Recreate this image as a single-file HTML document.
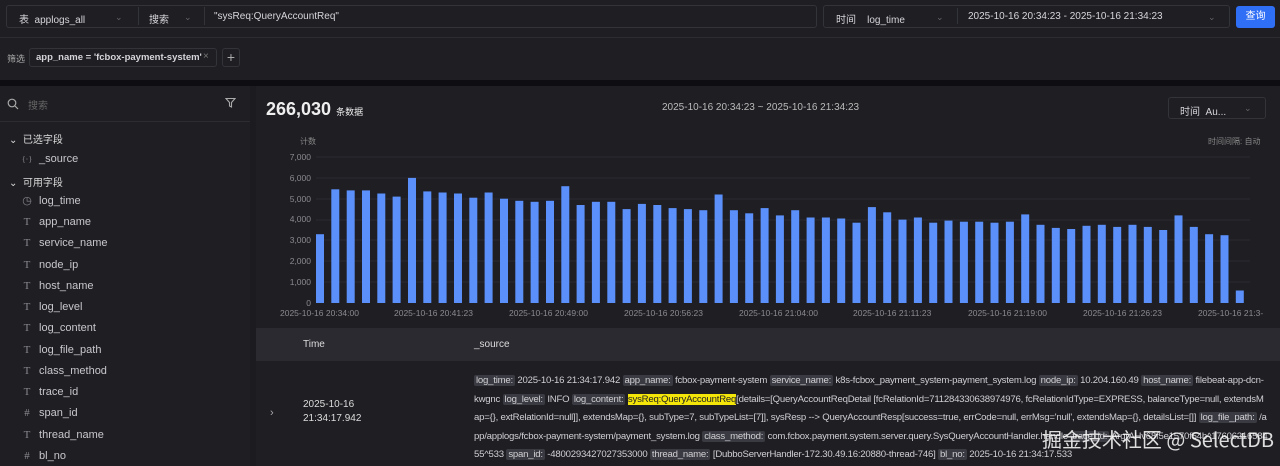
<!DOCTYPE html>
<html><head><meta charset="utf-8"><style>
*{margin:0;padding:0;box-sizing:border-box}
body{width:1280px;height:466px;overflow:hidden;background:#1b1b20;font-family:"Liberation Sans","Noto Sans CJK SC",sans-serif;color:#d6d6da;font-size:11px;position:relative}
.abs{position:absolute}
.box{position:absolute;border:1px solid #33333a;border-radius:3px;background:#1e1e23}
.chev{color:#666;font-size:9px}
.side div.f{position:absolute;left:20px;height:20px;line-height:20px;font-size:11px;color:#c8c8cc}
.side div.f i{display:inline-block;width:14px;font-style:normal;color:#8a8a90;font-family:"Liberation Serif",serif;margin-right:2px;text-align:center}
.tag{background:#3a3a42;color:#d0d0d4;padding:0 2px;border-radius:2px}
.src{position:absolute;left:474px;top:372px;width:794px;font-size:9.6px;line-height:18.5px;color:#d0d0d4;letter-spacing:-0.22px;word-break:break-all}
</style></head><body>
<div class="abs" style="left:0;top:0;width:1280px;height:37px;background:#1e1e23"></div>
<div class="box" style="left:6px;top:5px;width:811px;height:23px"></div>
<div class="abs" style="left:19px;top:11px;font-size:10px">表&nbsp; applogs_all</div>
<div class="abs chev" style="left:115px;top:12px">⌄</div>
<div class="abs" style="left:138px;top:7px;width:1px;height:18px;background:#33333a"></div>
<div class="abs" style="left:149px;top:11px;font-size:10px">搜索</div>
<div class="abs chev" style="left:184px;top:12px">⌄</div>
<div class="abs" style="left:204px;top:7px;width:1px;height:18px;background:#33333a"></div>
<div class="abs" style="left:214px;top:11px;font-size:10px">"sysReq:QueryAccountReq"</div>
<div class="box" style="left:823px;top:5px;width:407px;height:23px"></div>
<div class="abs" style="left:836px;top:11px;font-size:10px">时间&nbsp;&nbsp;&nbsp; log_time</div>
<div class="abs chev" style="left:936px;top:12px">⌄</div>
<div class="abs" style="left:957px;top:8px;width:1px;height:16px;background:#33333a"></div>
<div class="abs" style="left:968px;top:11px;font-size:10px">2025-10-16 20:34:23 - 2025-10-16 21:34:23</div>
<div class="abs chev" style="left:1208px;top:12px">⌄</div>
<div class="abs" style="left:1236px;top:6px;width:39px;height:22px;background:#2f6ff5;border-radius:3px;color:#fff;font-size:10px;text-align:center;line-height:22px">查询</div>
<div class="abs" style="left:0;top:37px;width:1280px;height:43px;background:#1e1e23;border-top:1px solid #2c2c33"></div>
<div class="abs" style="left:7px;top:52px;font-size:9px;color:#aaa">筛选</div>
<div class="box" style="left:29px;top:48px;width:188px;height:19px"></div>
<div class="abs" style="left:36px;top:52px;font-size:9.5px;font-weight:bold">app_name = 'fcbox-payment-system'</div>
<div class="abs" style="left:203px;top:51px;color:#777;font-size:10px">×</div>
<div class="box" style="left:222px;top:48px;width:18px;height:19px;text-align:center;line-height:16px;font-size:14px;color:#aaa">+</div>
<div class="abs" style="left:0;top:80px;width:1280px;height:6px;background:#0e0e12"></div>
<div class="abs side" style="left:0;top:86px;width:250px;height:380px;background:#1e1e23">
<div class="abs" style="left:0;top:35px;width:250px;height:1px;background:#2c2c33"></div>
<svg class="abs" style="left:7px;top:12px" width="12" height="12"><circle cx="5" cy="5" r="3.8" stroke="#aaa" fill="none" stroke-width="1.2"/><line x1="8" y1="8" x2="11" y2="11" stroke="#aaa" stroke-width="1.2"/></svg>
<div class="abs" style="left:28px;top:11px;color:#666;font-size:10px">搜索</div>
<svg class="abs" style="left:225px;top:11px" width="11" height="11"><path d="M1 1.5H10L6.5 5.5V10L4.5 9V5.5Z" stroke="#aaa" fill="none" stroke-width="1.1"/></svg>
<div class="abs" style="left:9px;top:45px;font-size:10px;color:#ddd">⌄&nbsp; 已选字段</div>
<div class="f" style="top:63px"><i style="font-size:8px">{·}</i> _source</div>
<div class="abs" style="left:9px;top:88px;font-size:10px;color:#ddd">⌄&nbsp; 可用字段</div>
<div class="f" style="top:105px"><i>◷</i> log_time</div>
<div class="f" style="top:126px"><i>T</i> app_name</div>
<div class="f" style="top:147px"><i>T</i> service_name</div>
<div class="f" style="top:169px"><i>T</i> node_ip</div>
<div class="f" style="top:190px"><i>T</i> host_name</div>
<div class="f" style="top:211px"><i>T</i> log_level</div>
<div class="f" style="top:232px"><i>T</i> log_content</div>
<div class="f" style="top:254px"><i>T</i> log_file_path</div>
<div class="f" style="top:275px"><i>T</i> class_method</div>
<div class="f" style="top:296px"><i>T</i> trace_id</div>
<div class="f" style="top:317px"><i>#</i> span_id</div>
<div class="f" style="top:339px"><i>T</i> thread_name</div>
<div class="f" style="top:360px"><i>#</i> bl_no</div>
</div>
<div class="abs" style="left:256px;top:86px;width:1024px;height:380px;background:#1e1e23"></div>
<div class="abs" style="left:266px;top:99px;font-size:18px;font-weight:bold;color:#eee">266,030 <span style="font-size:9px;font-weight:normal">条数据</span></div>
<div class="abs" style="left:662px;top:102px;font-size:10px;color:#bbb">2025-10-16 20:34:23 ~ 2025-10-16 21:34:23</div>
<div class="box" style="left:1168px;top:97px;width:98px;height:22px"></div>
<div class="abs" style="left:1180px;top:103px;font-size:10px">时间&nbsp; Au...</div>
<div class="abs chev" style="left:1244px;top:103px">⌄</div>
<div class="abs" style="left:300px;top:136px;font-size:8px;color:#888">计数</div>
<div class="abs" style="left:1208px;top:136px;font-size:8px;color:#888">时间间隔: 自动</div>
<svg class="abs" style="left:0;top:0" width="1280" height="330">
<g font-size="8.5" fill="#8a8a90" text-anchor="end" font-family="Liberation Sans">
<text x="311" y="160">7,000</text><text x="311" y="181">6,000</text><text x="311" y="202">5,000</text><text x="311" y="222">4,000</text><text x="311" y="243">3,000</text><text x="311" y="264">2,000</text><text x="311" y="285">1,000</text><text x="311" y="306">0</text>
</g>
<g stroke="#2a2a30"><line x1="316" x2="1250" y1="157" y2="157"/><line x1="316" x2="1250" y1="178" y2="178"/><line x1="316" x2="1250" y1="199" y2="199"/><line x1="316" x2="1250" y1="220" y2="220"/><line x1="316" x2="1250" y1="240" y2="240"/><line x1="316" x2="1250" y1="261" y2="261"/><line x1="316" x2="1250" y1="282" y2="282"/></g>
<g id="bars" fill="#5b8ff9"></g>
<g font-size="8.5" fill="#8a8a90" font-family="Liberation Sans">
<text x="280" y="316">2025-10-16 20:34:00</text><text x="394" y="316">2025-10-16 20:41:23</text><text x="509" y="316">2025-10-16 20:49:00</text><text x="624" y="316">2025-10-16 20:56:23</text><text x="739" y="316">2025-10-16 21:04:00</text><text x="853" y="316">2025-10-16 21:11:23</text><text x="968" y="316">2025-10-16 21:19:00</text><text x="1083" y="316">2025-10-16 21:26:23</text><text x="1198" y="316">2025-10-16 21:3-</text>
</g>
</svg>
<script>
var v=[3300,5450,5400,5400,5250,5100,6000,5350,5300,5250,5050,5300,5000,4900,4850,4900,5600,4700,4850,4850,4500,4750,4700,4550,4500,4450,5200,4450,4300,4550,4200,4450,4100,4100,4050,3850,4600,4350,4000,4100,3850,3950,3900,3900,3850,3900,4250,3750,3600,3550,3700,3750,3650,3750,3650,3500,4200,3650,3300,3250,600];
var s='';for(var i=0;i<v.length;i++){var x=320+i*15.33-4,h=v[i]*146/7000;s+='<rect x="'+x.toFixed(1)+'" y="'+(303-h).toFixed(1)+'" width="8" height="'+h.toFixed(1)+'"/>';}
document.getElementById('bars').innerHTML=s;
</script>
<div class="abs" style="left:256px;top:328px;width:1024px;height:33px;background:#2a2a30"></div>
<div class="abs" style="left:303px;top:339px;font-size:10px;color:#ddd">Time</div>
<div class="abs" style="left:474px;top:339px;font-size:10px;color:#ddd">_source</div>
<div class="abs" style="left:270px;top:407px;color:#aaa">›</div>
<div class="abs" style="left:303px;top:398px;font-size:10px;line-height:14px;color:#ddd">2025-10-16<br>21:34:17.942</div>
<div class="src"><span class="tag">log_time:</span> 2025-10-16 21:34:17.942 <span class="tag">app_name:</span> fcbox-payment-system <span class="tag">service_name:</span> k8s-fcbox_payment_system-payment_system.log <span class="tag">node_ip:</span> 10.204.160.49 <span class="tag">host_name:</span> filebeat-app-dcn-kwgnc <span class="tag">log_level:</span> INFO <span class="tag">log_content:</span> <span style="background:#f5e60a;color:#222">sysReq:QueryAccountReq</span>[details=[QueryAccountReqDetail [fcRelationId=711284330638974976, fcRelationIdType=EXPRESS, balanceType=null, extendsMap={}, extRelationId=null]], extendsMap={}, subType=7, subTypeList=[7]], sysResp --&gt; QueryAccountResp[success=true, errCode=null, errMsg='null', extendsMap={}, detailsList=[]] <span class="tag">log_file_path:</span> /app/applogs/fcbox-payment-system/payment_system.log <span class="tag">class_method:</span> com.fcbox.payment.system.server.query.SysQueryAccountHandler.handle <span class="tag">trace_id:</span> ArgrAHv68f5e1570f54b^1760621658455^533 <span class="tag">span_id:</span> -4800293427027353000 <span class="tag">thread_name:</span> [DubboServerHandler-172.30.49.16:20880-thread-746] <span class="tag">bl_no:</span> 2025-10-16 21:34:17.533</div>
<div class="abs" style="right:6px;top:424px;font-size:20px;color:rgba(255,255,255,0.85);white-space:nowrap;font-family:'Noto Sans CJK SC',sans-serif">掘金技术社区 @ SelectDB</div>
</body></html>
